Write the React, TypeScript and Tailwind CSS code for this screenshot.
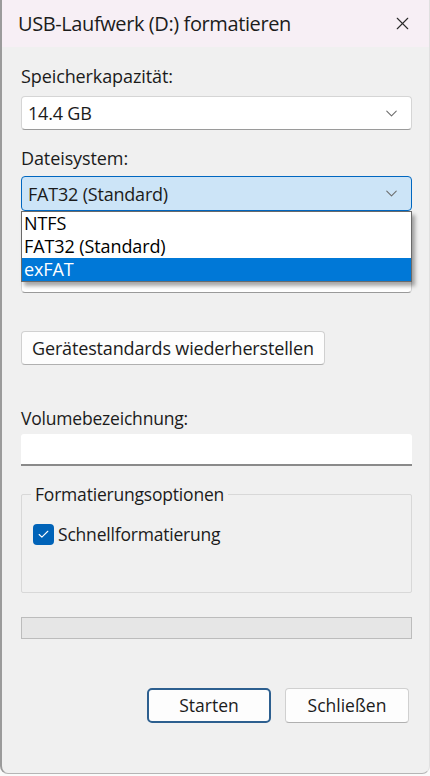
import { ChevronDown, X, Check } from "lucide-react";

const font = { fontFamily: '"Open Sans", "Noto Sans", sans-serif' };

function Combo({ value, active }: { value: string; active?: boolean }) {
  return (
    <div
      className={
        active
          ? "h-[35px] flex items-center justify-between pl-[6px] pr-[10px] rounded-[4px] border border-[#0067c0] bg-[#cce4f7]"
          : "h-[34px] flex items-center justify-between pl-[6px] pr-[10px] rounded-[4px] border border-[#d5d5d5] border-b-[#9a9a9a] bg-white"
      }
    >
      <span className="text-[18px] text-[#1b1b1b] leading-none tracking-[-0.2px]">{value}</span>
      <ChevronDown className="h-[19px] w-[19px] text-[#6b6b6b]" strokeWidth={1.3} />
    </div>
  );
}

export default function App() {
  const options = ["NTFS", "FAT32 (Standard)", "exFAT"];
  return (
    <div className="w-[430px] h-[776px] bg-[#fafafa]" style={font}>
      <div className="h-[774px] flex flex-col bg-[#f0f0f0] border-l-2 border-b border-r border-l-[#9b9b9b] border-b-[#b5b5b5] border-r-[#e0e0e0] rounded-b-[8px] overflow-hidden">
        <div className="h-[47px] shrink-0 flex items-center justify-between pl-[16px] pr-[16px] bg-[#f7eff5]">
          <span className="text-[20px] text-[#1c1c1c] tracking-[-0.4px]">USB-Laufwerk (D:) formatieren</span>
          <X className="h-[21px] w-[21px] text-[#2a2a2a]" strokeWidth={1.3} />
        </div>

        <div className="flex flex-col pl-[19px] pr-[17px] text-[#1b1b1b]">
          <div className="mt-[18px] h-[22px] text-[18px] leading-[22px] tracking-[-0.1px]">Speicherkapazität:</div>
          <div className="mt-[9px]">
            <Combo value="14.4 GB" />
          </div>

          <div className="mt-[17px] h-[22px] text-[18px] leading-[22px] tracking-[-0.1px]">Dateisystem:</div>
          <div className="mt-[7px] relative z-10">
            <Combo value="FAT32 (Standard)" active />
            <div className="absolute left-0 right-0 top-full bg-white border border-[#6a6a6a] shadow-[3px_4px_4px_rgba(0,0,0,0.35)]">
              {options.map((o, i) => (
                <div
                  key={o}
                  className={
                    i === 2
                      ? "h-[23px] pl-[2px] text-[18px] leading-[23px] tracking-[-0.1px] text-white bg-[#0078d7]"
                      : "h-[23px] pl-[2px] text-[18px] leading-[23px] tracking-[-0.1px] text-black"
                  }
                >
                  {o}
                </div>
              ))}
            </div>
          </div>

          <div className="mt-[17px] h-[22px]" />
          <div className="mt-[9px] h-[34px] rounded-[4px] border border-[#d5d5d5] border-b-[#9a9a9a] bg-white" />

          <div className="mt-[38px]">
            <div className="inline-flex h-[34px] items-center px-[10px] rounded-[4px] border border-[#d0d0d0] border-b-[#b0b0b0] bg-[#fdfdfd] text-[18px] tracking-[-0.15px]">
              Gerätestandards wiederherstellen
            </div>
          </div>

          <div className="mt-[42px] h-[22px] text-[17.5px] leading-[22px] tracking-[-0.2px]">Volumebezeichnung:</div>
          <div className="mt-[5px] h-[32px] bg-white rounded-t-[3px] border-b-2 border-[#8a8a8a]" />

          <div className="mt-[28px] relative h-[99px] border border-[#d8d8d8] rounded-[2px]">
            <span className="absolute -top-[12px] left-[9px] px-[4px] bg-[#f0f0f0] text-[17.5px] leading-[22px] tracking-[-0.2px]">
              Formatierungsoptionen
            </span>
            <div className="mt-[26px] ml-[11px] flex items-center gap-[4px]">
              <div className="h-[21px] w-[21px] rounded-[4px] bg-[#0063b8] flex items-center justify-center">
                <Check className="h-[13px] w-[13px] text-white" strokeWidth={2} />
              </div>
              <span className="text-[17.5px] tracking-[-0.2px]">Schnellformatierung</span>
            </div>
          </div>

          <div className="mt-[24px] h-[22px] bg-[#e6e6e6] border border-[#bcbcbc]" />

          <div className="mt-[49px] flex justify-end gap-[14px] pr-[3px]">
            <div className="w-[124px] h-[35px] flex items-center justify-center rounded-[5px] border-2 border-[#2d5f8f] bg-[#fdfdfd] text-[17.5px]">
              Starten
            </div>
            <div className="w-[124px] h-[35px] flex items-center justify-center rounded-[4px] border border-[#d0d0d0] border-b-[#b0b0b0] bg-[#fdfdfd] text-[17.5px]">
              Schließen
            </div>
          </div>
        </div>
      </div>
    </div>
  );
}
